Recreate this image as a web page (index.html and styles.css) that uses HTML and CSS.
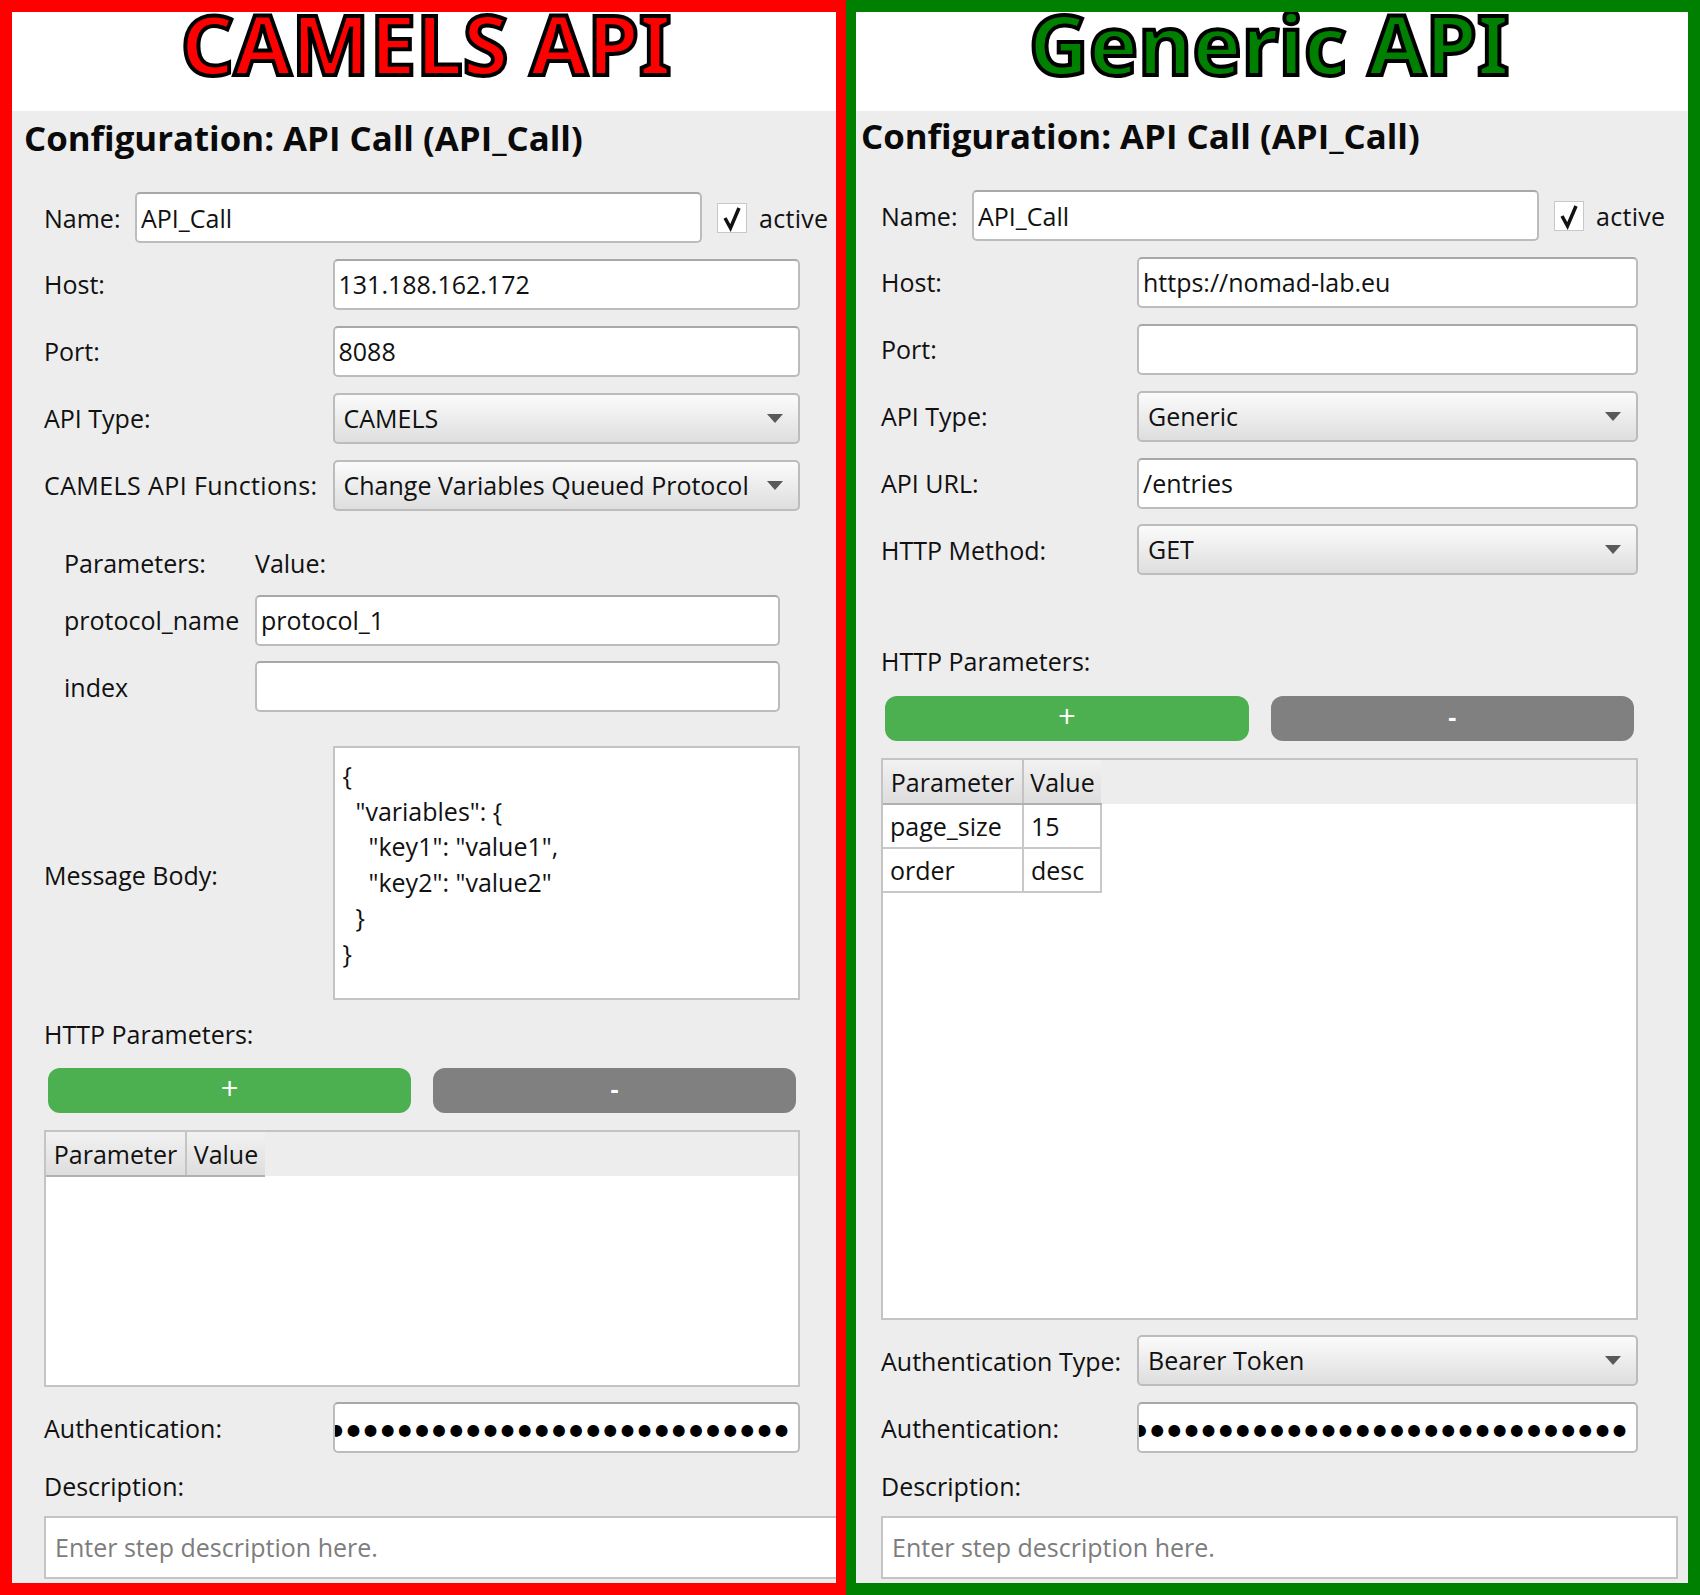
FILE: index.html
```html
<!DOCTYPE html>
<html lang="en">
<head>
    <meta charset="UTF-8">
    <meta name="viewport" content="width=device-width, initial-scale=1.0">
    <title>CAMELS API vs Generic API</title>
    <link rel="stylesheet" href="styles.css">
</head>
<body>
    <section class="panel panel-camels">
        <h1 class="banner">CAMELS API</h1>
        <div class="config">
            <h2 class="config-title">Configuration: API Call (API_Call)</h2>
            <div class="form">
                <div class="row">
                    <label class="label label-name">Name:</label>
                    <input class="field field-name" type="text" value="API_Call">
                    <span class="check"><svg viewBox="0 0 30 30" width="30" height="30"><path d="M8 15l5.500 10L22 5" fill="none" stroke="#111" stroke-width="3.500"/></svg></span>
                    <span class="check-label">active</span>
                </div>
                <div class="row">
                    <label class="label">Host:</label>
                    <input class="field" type="text" value="131.188.162.172">
                </div>
                <div class="row">
                    <label class="label">Port:</label>
                    <input class="field" type="text" value="8088">
                </div>
                <div class="row">
                    <label class="label">API Type:</label>
                    <div class="combo">CAMELS</div>
                </div>
                <div class="row">
                    <label class="label label-wide">CAMELS API Functions:</label>
                    <div class="combo">Change Variables Queued Protocol</div>
                </div>
                <div class="param-head">
                    <span class="param-name">Parameters:</span>
                    <span>Value:</span>
                </div>
                <div class="row param-row">
                    <label class="param-name">protocol_name</label>
                    <input class="field" type="text" value="protocol_1">
                </div>
                <div class="row param-row">
                    <label class="param-name">index</label>
                    <input class="field" type="text" value="">
                </div>
                <div class="body-row">
                    <label class="label">Message Body:</label>
                    <pre class="body-text">{
  "variables": {
    "key1": "value1",
    "key2": "value2"
  }
}</pre>
                </div>
                <div class="section-label">HTTP Parameters:</div>
                <div class="buttons">
                    <button class="btn btn-add" type="button">+</button>
                    <button class="btn btn-remove" type="button">-</button>
                </div>
                <div class="table-box table-short">
                    <table class="param-table">
                        <thead><tr><th class="col-param">Parameter</th><th class="col-value">Value</th></tr></thead>
                    </table>
                </div>
                <div class="row row-auth">
                    <label class="label">Authentication:</label>
                    <div class="secret"><span>●●●●●●●●●●●●●●●●●●●●●●●●●●●●●●</span></div>
                </div>
                <div class="desc-label">Description:</div>
                <div class="desc-box">Enter step description here.</div>
            </div>
        </div>
    </section>

    <section class="panel panel-generic">
        <h1 class="banner">Generic API</h1>
        <div class="config">
            <h2 class="config-title">Configuration: API Call (API_Call)</h2>
            <div class="form">
                <div class="row">
                    <label class="label label-name">Name:</label>
                    <input class="field field-name" type="text" value="API_Call">
                    <span class="check"><svg viewBox="0 0 30 30" width="30" height="30"><path d="M8 15l5.500 10L22 5" fill="none" stroke="#111" stroke-width="3.500"/></svg></span>
                    <span class="check-label">active</span>
                </div>
                <div class="row">
                    <label class="label">Host:</label>
                    <input class="field" type="text" value="https://nomad-lab.eu">
                </div>
                <div class="row">
                    <label class="label">Port:</label>
                    <input class="field" type="text" value="">
                </div>
                <div class="row">
                    <label class="label">API Type:</label>
                    <div class="combo">Generic</div>
                </div>
                <div class="row">
                    <label class="label">API URL:</label>
                    <input class="field" type="text" value="/entries">
                </div>
                <div class="row">
                    <label class="label">HTTP Method:</label>
                    <div class="combo">GET</div>
                </div>
                <div class="section-label">HTTP Parameters:</div>
                <div class="buttons">
                    <button class="btn btn-add" type="button">+</button>
                    <button class="btn btn-remove" type="button">-</button>
                </div>
                <div class="table-box table-tall">
                    <table class="param-table">
                        <thead><tr><th class="col-param">Parameter</th><th class="col-value">Value</th></tr></thead>
                        <tbody>
                            <tr><td>page_size</td><td>15</td></tr>
                            <tr><td>order</td><td>desc</td></tr>
                        </tbody>
                    </table>
                </div>
                <div class="row row-auth">
                    <label class="label">Authentication Type:</label>
                    <div class="combo">Bearer Token</div>
                </div>
                <div class="row">
                    <label class="label">Authentication:</label>
                    <div class="secret"><span>●●●●●●●●●●●●●●●●●●●●●●●●●●●●●●</span></div>
                </div>
                <div class="desc-label">Description:</div>
                <div class="desc-box">Enter step description here.</div>
            </div>
        </div>
    </section>
</body>
</html>
```

FILE: styles.css
```css
* {
    box-sizing: border-box;
}
body {
    margin: 0;
    display: flex;
    height: 1595px;
    overflow: hidden;
    font-family: "Open Sans", "Noto Sans", sans-serif;
    font-size: 25px;
    color: #111;
}
.panel {
    display: flex;
    flex-direction: column;
    background: white;
    overflow: hidden;
}
.panel-camels {
    width: 846px;
    border: solid red;
    border-width: 12px 10px 12px 12px;
}
.panel-generic {
    width: 854px;
    border: solid green;
    border-width: 12px 12px 12px 10px;
}
.banner {
    height: 99px;
    flex: none;
    margin: 0;
    text-align: center;
    font-family: "Noto Sans", sans-serif;
    font-size: 83px;
    font-weight: 700;
    line-height: 62px;
    -webkit-text-stroke: 4px black;
}
.panel-camels .banner {
    color: red;
    padding-left: 4px;
}
.panel-generic .banner {
    color: green;
    padding-right: 6px;
}
.config {
    flex: 1;
    background: #ededed;
    overflow: hidden;
}
.config-title {
    margin: 0;
    height: 54px;
    line-height: 54px;
    font-size: 34.800px;
    font-weight: 700;
    white-space: nowrap;
    color: #0a0a0a;
}
.panel-camels .config-title {
    padding-left: 12px;
}
.panel-generic .config-title {
    height: 52px;
    line-height: 50px;
    padding-left: 5px;
}
.form {
    padding-top: 27px;
}
.panel-camels .form {
    padding-left: 32px;
    width: 788px;
}
.panel-generic .form {
    padding-left: 25px;
    width: 782px;
}
.row {
    display: flex;
    align-items: center;
    height: 51px;
    margin-bottom: 15.900px;
}
.label {
    flex: none;
    width: 288.500px;
}
.panel-generic .label {
    width: 256px;
}
.panel .label-name {
    width: 91px;
}
.label-wide {
    letter-spacing: 0.400px;
}
.field {
    flex: 1;
    min-width: 0;
    height: 51px;
    padding: 0 4px;
    border: 2px solid #bcbcbc;
    border-top-color: #a8a8a8;
    border-radius: 5px;
    background: white;
    font: inherit;
    color: #111;
    outline: none;
}
.field-name {
    flex: none;
    width: 567px;
}
.check {
    flex: none;
    width: 30px;
    height: 30px;
    margin-left: 15px;
    background: white;
    border: 1px solid #c8c8c8;
}
.check svg {
    display: block;
    margin: -1px;
}
.check-label {
    margin-left: 12px;
    letter-spacing: 0.300px;
    white-space: nowrap;
}
.combo {
    position: relative;
    flex: 1;
    height: 51px;
    padding-left: 9px;
    border: 2px solid #bcbcbc;
    border-radius: 5px;
    background: linear-gradient(#fbfbfb, #dedede);
    line-height: 47px;
    white-space: nowrap;
}
.combo::after {
    content: "";
    position: absolute;
    right: 15px;
    top: 19px;
    border-style: solid;
    border-width: 9px 8px 0;
    border-color: #595959 transparent transparent;
}
.param-head {
    display: flex;
    align-items: center;
    height: 40px;
    margin: 32px 0 12px 20px;
}
.param-name {
    flex: none;
    width: 191px;
}
.param-row {
    margin-left: 20px;
    margin-right: 20px;
}
.body-row {
    display: flex;
    align-items: center;
    margin-top: 34px;
}
.body-row .label {
    padding-top: 4px;
}
.body-text {
    flex: 1;
    height: 254px;
    margin: 0;
    padding: 10px 8px;
    background: white;
    border: 2px solid #c4c4c4;
    font: inherit;
    line-height: 35.500px;
}
.section-label {
    height: 34px;
    line-height: 34px;
    margin-top: 17px;
}
.panel-generic .section-label {
    margin-top: 69px;
}
.buttons {
    display: flex;
    gap: 22px;
    margin: 17px 4px 17px 4px;
}
.panel-generic .buttons {
    margin-top: 18px;
}
.btn {
    flex: 1;
    height: 45px;
    padding: 0 0 5px;
    border: none;
    border-radius: 12px;
    color: white;
    font-family: inherit;
    font-size: 25px;
    font-weight: 700;
    line-height: 40px;
}
.btn-add {
    background: #4caf50;
    font-size: 31px;
    font-weight: 400;
}
.btn-remove {
    background: #808080;
}
.table-box {
    position: relative;
    background: linear-gradient(#ededed 44px, white 44px);
    border: 2px solid #c4c4c4;
}
.table-short {
    height: 257px;
}
.table-tall {
    height: 562px;
}
.param-table {
    border-collapse: collapse;
    table-layout: fixed;
    width: 219px;
}
.col-param {
    width: 140px;
}
.param-table th {
    height: 44px;
    padding: 0;
    font-weight: 400;
    text-align: center;
    background: linear-gradient(#f2f2f2, #dddddd);
    border-right: 2px solid #c4c4c4;
    border-bottom: 2px solid #b0b0b0;
}
.param-table th:last-child {
    border-right: none;
}
.param-table td {
    height: 44px;
    padding: 0 7px;
    background: white;
    border-right: 2px solid #c8c8c8;
    border-bottom: 2px solid #c8c8c8;
}
.row-auth {
    margin-top: 15px;
}
.panel-camels .row-auth {
    margin-bottom: 0;
}
.panel-generic .row:last-of-type {
    margin-bottom: 0;
}
.secret {
    flex: 1;
    display: flex;
    justify-content: flex-end;
    height: 51px;
    padding-right: 6px;
    overflow: hidden;
    background: white;
    border: 2px solid #bcbcbc;
    border-top-color: #a8a8a8;
    border-radius: 5px;
    font-family: "DejaVu Sans", sans-serif;
    font-size: 15.500px;
    line-height: 53px;
    letter-spacing: 3.600px;
    color: black;
    white-space: nowrap;
}
.desc-label {
    height: 30px;
    line-height: 30px;
    margin-top: 18px;
}
.desc-box {
    height: 63px;
    margin-top: 15px;
    padding-left: 9px;
    background: white;
    border: 2px solid #c4c4c4;
    line-height: 59px;
    color: #7d7d7d;
    white-space: nowrap;
}
.panel-camels .desc-box {
    width: 850px;
}
.panel-generic .desc-box {
    width: 797px;
}
```
